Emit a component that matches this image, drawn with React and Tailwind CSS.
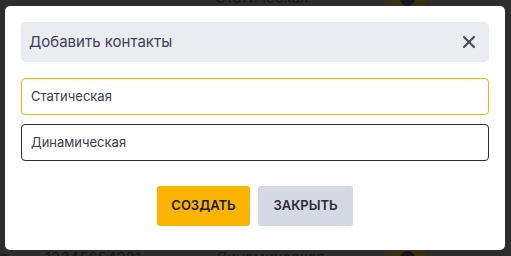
import React from 'react';
import { X } from 'lucide-react';

const font = { fontFamily: 'Inter, "Noto Sans", sans-serif' };

const App = () => {
  return (
    <div className="relative w-[511px] h-[256px] overflow-hidden bg-[#2d2d2d]" style={font}>
      {/* Page behind the overlay */}
      <div className="flex flex-col justify-between h-full text-[#151515] text-[15px]">
        <div className="flex items-center h-[24px] -mt-[14px]">
          <span className="w-[45px]"></span>
          <span className="w-[170px]"></span>
          <span className="w-[172px]">Статическая</span>
          <span className="w-[40px] h-[40px] rounded-full bg-[#3a2f12] flex items-center justify-center">
            <span className="w-[15px] h-[15px] rounded-full bg-[#15151d]"></span>
          </span>
        </div>
        <div className="flex items-center h-[24px] -mb-[14px]">
          <span className="w-[45px]">а</span>
          <span className="w-[170px]">12345654321</span>
          <span className="w-[172px]">Динамическая</span>
          <span className="w-[40px] h-[40px] rounded-full bg-[#3a2f12] flex items-center justify-center">
            <span className="w-[15px] h-[15px] rounded-full bg-[#15151d]"></span>
          </span>
        </div>
      </div>

      {/* Modal */}
      <div className="absolute left-[5px] top-[6px] w-[500px] h-[244px] bg-white rounded-[5px] px-4 pt-4">
        <div className="flex items-center justify-between h-[40px] bg-[#ebecf1] rounded-[5px] pl-2 pr-[10px]">
          <span className="text-[15px] text-[#3f4254]">Добавить контакты</span>
          <X size={20} strokeWidth={2.6} className="text-[#4a4d5c]" />
        </div>

        <div className="flex flex-col gap-[9px] mt-4">
          <div className="h-[37px] border border-[#fbb500] rounded-[4px] flex items-center pl-[9px] text-[13px] text-[#3a3d4a]">
            Статическая
          </div>
          <div className="h-[37px] border border-[#2d2f3a] rounded-[4px] flex items-center pl-[9px] text-[13px] text-[#3a3d4a]">
            Динамическая
          </div>
        </div>

        <div className="flex justify-center gap-2 mt-[25px]">
          <button className="w-[93px] h-[40px] rounded-[3px] bg-[#fbb500] text-[13px] font-semibold text-[#1a1a1a] uppercase">
            Создать
          </button>
          <button className="w-[95px] h-[40px] rounded-[3px] bg-[#d5d9e3] text-[13px] font-semibold text-[#2a2c36] uppercase">
            Закрыть
          </button>
        </div>
      </div>
    </div>
  );
};

export default App;
